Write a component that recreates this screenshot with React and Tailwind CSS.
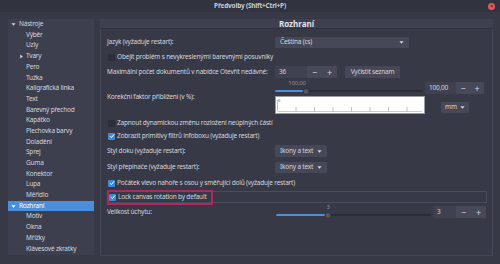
import React from "react";

const tree = [
  { label: "Nástroje", level: 0, open: true },
  { label: "Výběr", level: 1 },
  { label: "Uzly", level: 1 },
  { label: "Tvary", level: 1, closed: true },
  { label: "Pero", level: 1 },
  { label: "Tužka", level: 1 },
  { label: "Kaligrafická linka", level: 1 },
  { label: "Text", level: 1 },
  { label: "Barevný přechod", level: 1 },
  { label: "Kapátko", level: 1 },
  { label: "Plechovka barvy", level: 1 },
  { label: "Doladění", level: 1 },
  { label: "Sprej", level: 1 },
  { label: "Guma", level: 1 },
  { label: "Konektor", level: 1 },
  { label: "Lupa", level: 1 },
  { label: "Měřidlo", level: 1 },
  { label: "Rozhraní", level: 0, open: true, selected: true },
  { label: "Motiv", level: 1 },
  { label: "Okna", level: 1 },
  { label: "Mřížky", level: 1 },
  { label: "Klávesové zkratky", level: 1 },
];

function Caret({ down = true }) {
  return (
    <svg width="5" height="5" viewBox="0 0 6 6" className="shrink-0">
      {down ? (
        <path d="M0.5 1.5 L5.5 1.5 L3 4.5 Z" fill="currentColor" />
      ) : (
        <path d="M1.5 0.5 L4.5 3 L1.5 5.5 Z" fill="currentColor" />
      )}
    </svg>
  );
}

function Check({ checked }) {
  return (
    <span
      className={
        "w-[7px] h-[7px] rounded-[1px] flex items-center justify-center shrink-0 " +
        (checked ? "bg-[#3f8ad8]" : "bg-[#2c2e39]")
      }
    >
      {checked && (
        <svg width="6" height="6" viewBox="0 0 6 6">
          <path d="M1 3.2 L2.4 4.6 L5 1.4" stroke="#fff" strokeWidth="1" fill="none" />
        </svg>
      )}
    </span>
  );
}

function CheckRow({ checked, children }) {
  return (
    <div className="flex items-center gap-[2px] pl-[1px]">
      <Check checked={checked} />
      <span>{children}</span>
    </div>
  );
}

function Dropdown({ children, className }) {
  return (
    <div
      className={
        "flex items-center justify-between bg-[#464858] rounded-[1px] pl-[5px] pr-[5px] " +
        className
      }
    >
      <span>{children}</span>
      <Caret />
    </div>
  );
}

function Spin({ value, field, className }) {
  return (
    <div className={"flex h-[12px] rounded-[1px] overflow-hidden " + className}>
      <div className={"bg-[#3f4150] flex items-center pl-[4px] " + field}>{value}</div>
      <div className="flex-1 flex bg-[#474958] text-[9px] leading-none">
        <span className="flex-1 flex items-center justify-center">−</span>
        <span className="flex-1 flex items-center justify-center">+</span>
      </div>
    </div>
  );
}

function Slider({ width, fill, label }) {
  return (
    <div className="relative h-[18px]" style={{ width }}>
      <span
        className="absolute top-[2px] text-[6px] text-[#8d8f9b] -translate-x-1/2"
        style={{ left: label }}
      >
        {label === fill ? "3" : "100,00"}
      </span>
      <div className="absolute left-0 right-0 top-[12px] h-[2px] bg-[#2a2c37] rounded-full" />
      <div
        className="absolute left-0 top-[12px] h-[2px] bg-[#4a8fdb] rounded-full"
        style={{ width: fill }}
      />
      <div
        className="absolute top-[9.5px] w-[7px] h-[7px] rounded-full bg-[#545666] border border-[#2e303b] -translate-x-1/2"
        style={{ left: fill }}
      />
    </div>
  );
}

function Ruler() {
  const ticks = [20, 38.5, 57, 75.5, 94, 112.5, 131];
  return (
    <div className="w-[150px] h-[18px] bg-white border border-[#9a9ca6]">
      <svg width="148" height="16" viewBox="0 0 148 16">
        <text x="2" y="5" fontSize="4" fill="#555" fontFamily="Noto Sans, sans-serif">
          0
        </text>
        <line x1="1.5" y1="3" x2="1.5" y2="14" stroke="#999" strokeWidth="0.6" />
        <line x1="1.5" y1="14.5" x2="146" y2="14.5" stroke="#aaa" strokeWidth="0.6" />
        {ticks.map((t) => (
          <line key={t} x1={t} y1="10" x2={t} y2="14.5" stroke="#999" strokeWidth="0.6" />
        ))}
      </svg>
    </div>
  );
}

export default function App() {
  return (
    <div className="w-[500px] h-[264px] overflow-hidden whitespace-nowrap bg-[#373947] text-[#d3d5dc] font-['Noto_Sans',sans-serif] text-[6.5px] tracking-[-0.2px] leading-none flex flex-col">
      <div className="h-[12px] flex items-center justify-center relative bg-[#31333f]">
        <span className="font-bold text-[6.5px] text-[#c9cbd3]">Předvolby (Shift+Ctrl+P)</span>
        <span className="absolute right-[5px] top-[2.5px] w-[7px] h-[7px] rounded-full bg-[#e05a5d] flex items-center justify-center text-[#5a1c1e] text-[6px] font-bold">
          ×
        </span>
      </div>

      <div className="flex-1 flex pl-[8px] pr-[7px] pt-[7px] pb-[8px] gap-[6px]">
        <div className="w-[86px] h-[236px] bg-[#3d3f4e] flex flex-col">
          {tree.map((it) => (
            <div
              key={it.label}
              className={
                "h-[10.7px] flex items-center shrink-0 " +
                (it.selected ? "bg-[#4a8fdb] text-white" : "")
              }
            >
              {it.level === 0 ? (
                <div className="flex items-center pl-[3px] gap-[3px]">
                  <Caret />
                  <span>{it.label}</span>
                </div>
              ) : (
                <div className="flex items-center pl-[11px] gap-[2px]">
                  <span className="w-[5px] flex justify-center">{it.closed && <Caret down={false} />}</span>
                  <span>{it.label}</span>
                </div>
              )}
            </div>
          ))}
        </div>

        <div className="w-[393px] flex flex-col">
          <div className="h-[10px] bg-[#3e4050] border-b border-[#2f313c] flex items-center justify-center font-bold text-[8px] text-[#dfe1e7] tracking-normal">
            Rozhraní
          </div>
          <div className="flex-1 border-x border-b border-[#454757] pl-[6px] pt-[8px]">
            <div className="h-[11px] flex items-center">
              <span className="w-[168px]">Jazyk (vyžaduje restart):</span>
              <Dropdown className="w-[134px] h-[11px]">Čeština (cs)</Dropdown>
            </div>
            <div className="h-[18px] flex items-center">
              <CheckRow>Obejít problém s nevykreslenými barevnými posuvníky</CheckRow>
            </div>
            <div className="h-[12px] flex items-center">
              <span className="w-[168px]">Maximální počet dokumentů v nabídce Otevřít nedávné:</span>
              <Spin value="36" field="w-[32px]" className="w-[62px]" />
              <div className="ml-[8px] h-[12px] w-[55px] bg-[#464858] rounded-[1px] flex items-center justify-center">
                Vyčistit seznam
              </div>
            </div>

            <div className="h-[39px] flex">
              <span className="w-[168px] pt-[16px]">Korekční faktor přiblížení (v %):</span>
              <div className="w-[150px] flex flex-col">
                <Slider width={148} fill={31} label={22} />
                <Ruler />
              </div>
              <div className="flex flex-col pt-[4px]">
                <Spin value="100,00" field="w-[31px]" className="w-[59px]" />
                <div className="pl-[16px] pt-[8px]">
                  <Dropdown className="w-[28px] h-[11px] !pl-[4px] !pr-[4px]">mm</Dropdown>
                </div>
              </div>
            </div>

            <div className="h-[13px] flex items-center">
              <CheckRow>Zapnout dynamickou změnu rozložení neúplných částí</CheckRow>
            </div>
            <div className="h-[12px] flex items-center">
              <CheckRow checked>Zobrazit primitivy filtrů infoboxu (vyžaduje restart)</CheckRow>
            </div>
            <div className="h-[18px] flex items-center">
              <span className="w-[168px]">Styl doku (vyžaduje restart):</span>
              <Dropdown className="w-[52px] h-[12px]">Ikony a text</Dropdown>
            </div>
            <div className="h-[15px] flex items-center">
              <span className="w-[168px]">Styl přepínače (vyžaduje restart):</span>
              <Dropdown className="w-[52px] h-[11px]">Ikony a text</Dropdown>
            </div>
            <div className="h-[16px] flex items-center">
              <CheckRow checked>Počátek vlevo nahoře s osou y směřující dolů (vyžaduje restart)</CheckRow>
            </div>
            <div className="h-[12px] w-[380px] relative border border-[#4a4c5c] flex items-center">
              <CheckRow checked>Lock canvas rotation by default</CheckRow>
              <div className="absolute -left-[1px] -top-[2px] w-[106px] h-[15px] border-2 border-[#b0285f]" />
            </div>
            <div className="h-[18px] flex items-center">
              <span className="w-[169px]">Velikost úchytu:</span>
              <div className="-mt-[2px]">
                <Slider width={155} fill={52} label={52} />
              </div>
              <Spin value="3" field="w-[23px]" className="w-[53px] ml-[2px]" />
            </div>
          </div>
        </div>
      </div>
    </div>
  );
}
